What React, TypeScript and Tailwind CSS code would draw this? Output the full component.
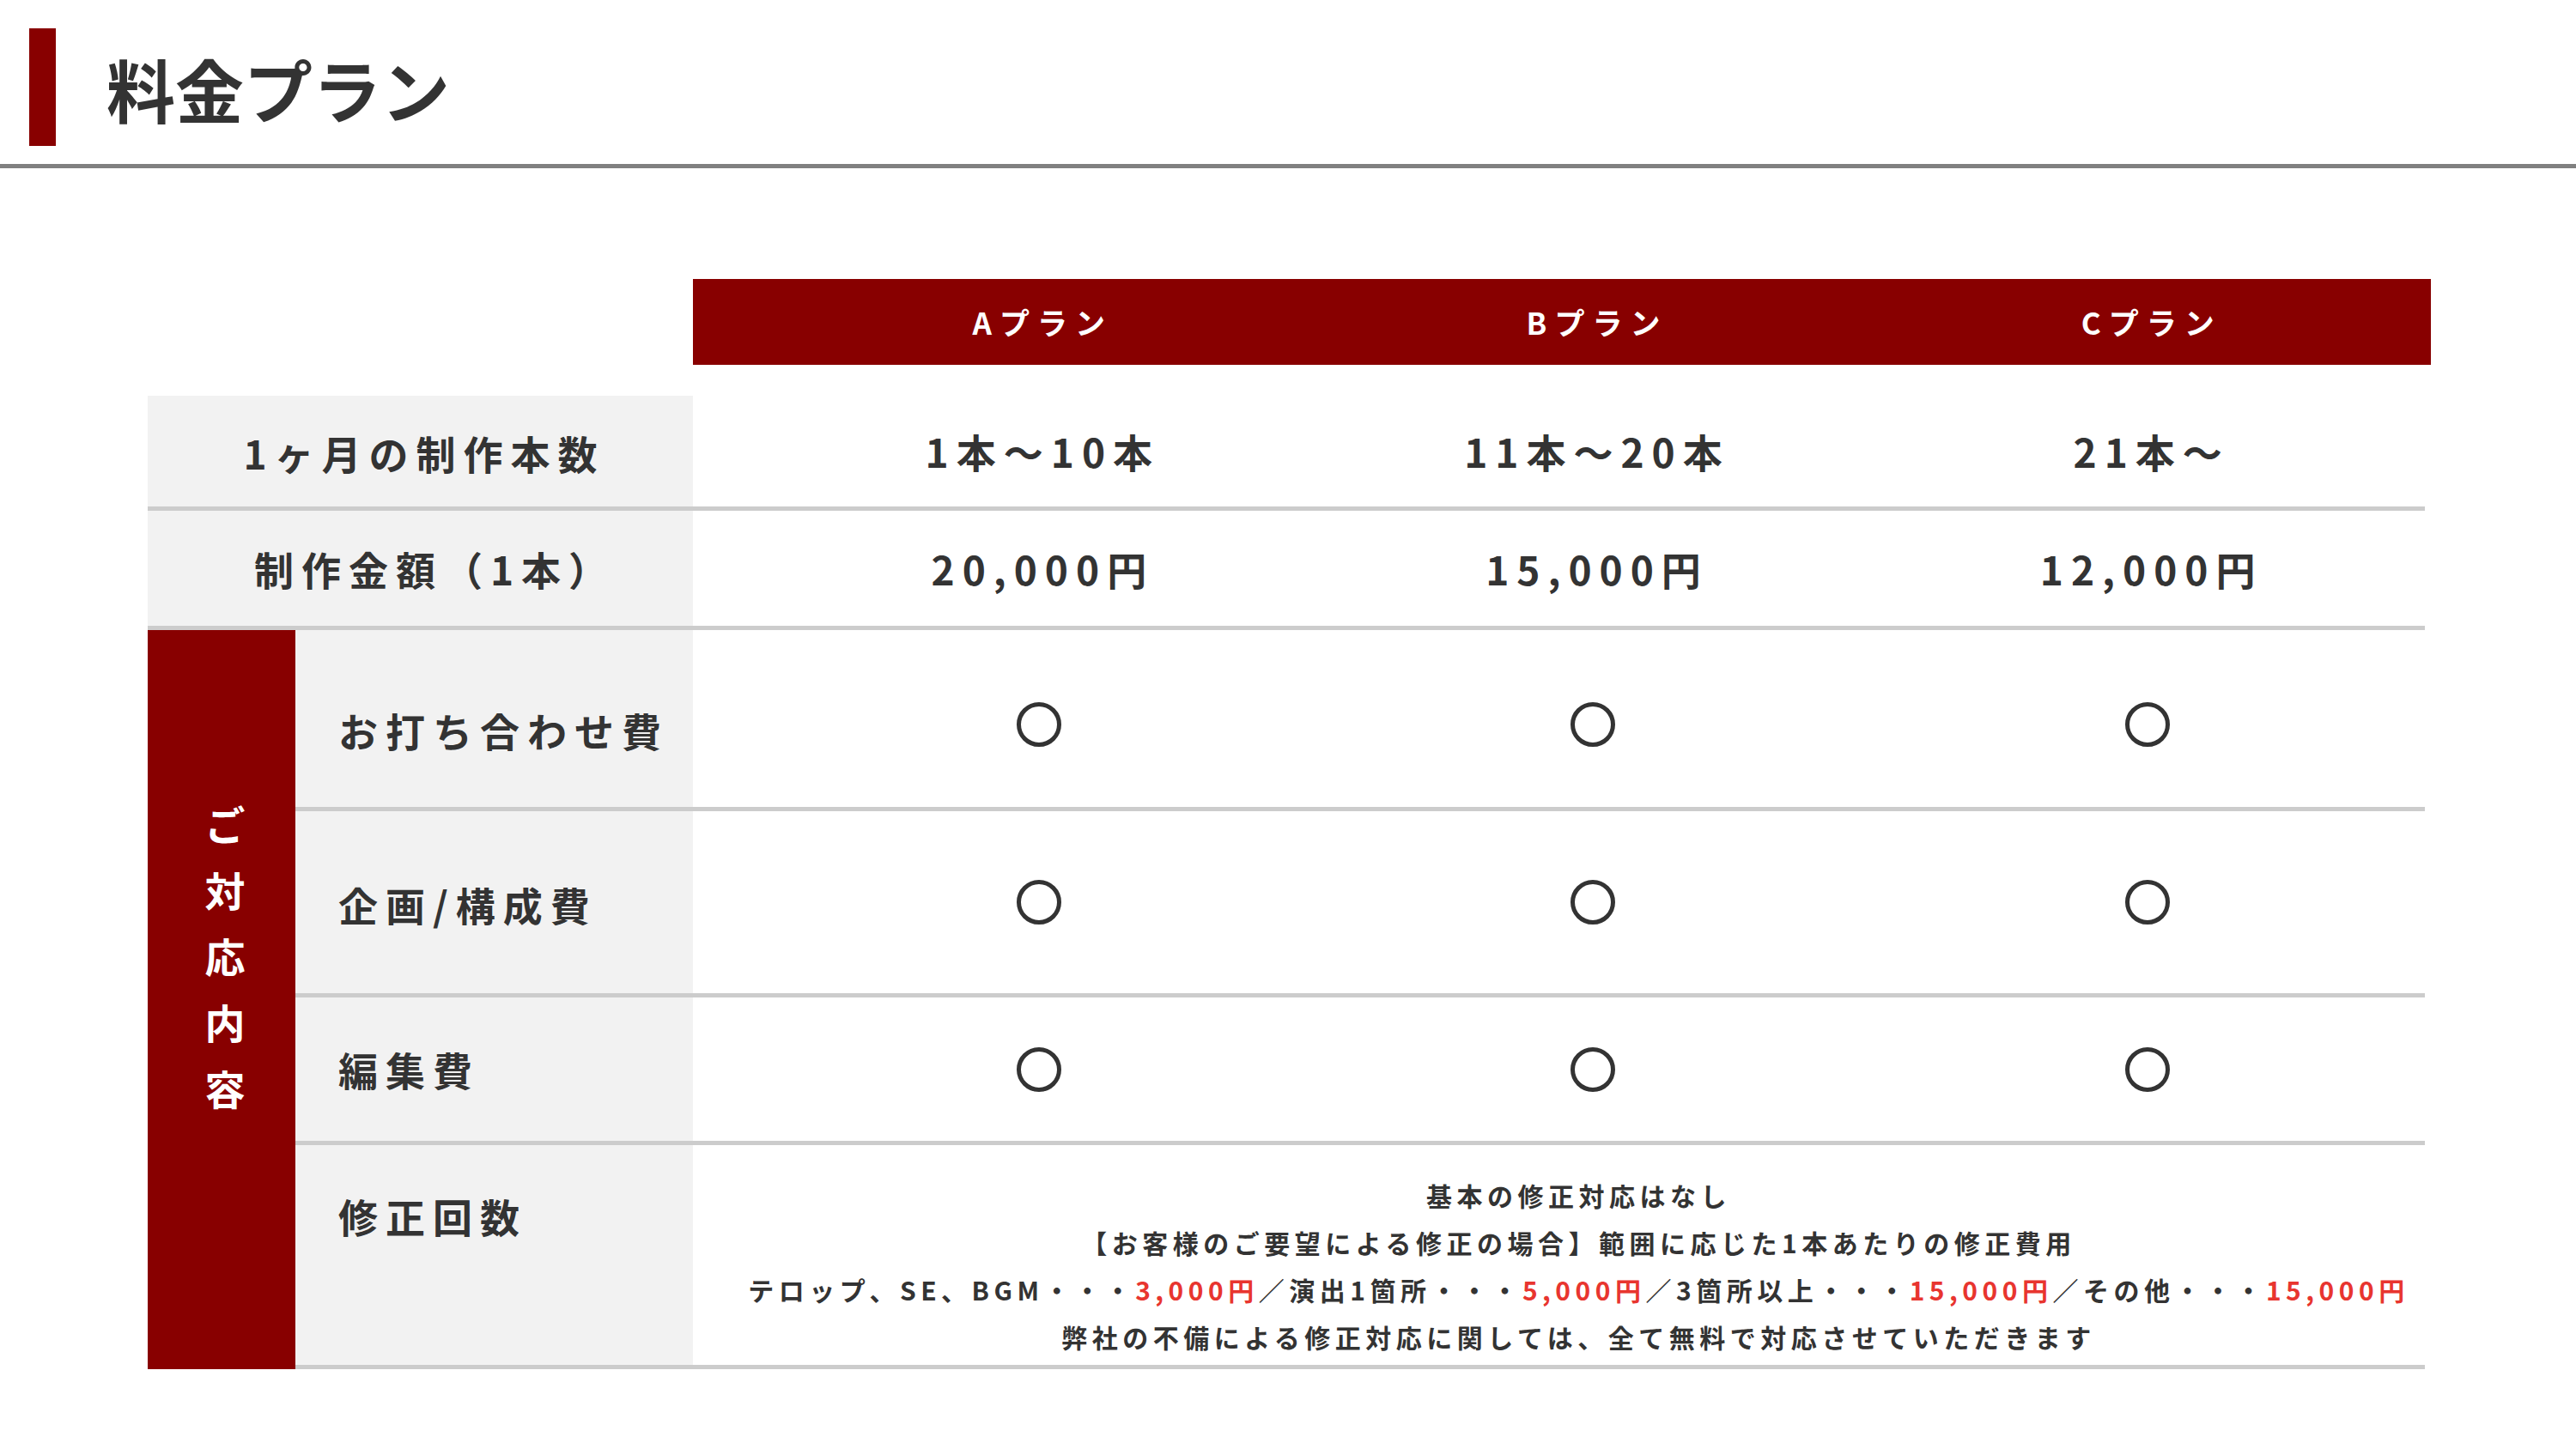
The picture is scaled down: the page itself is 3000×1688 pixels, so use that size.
const FONT = { fontFamily: '"Noto Sans CJK JP", "Noto Sans", sans-serif' }

const plans = ['Aプラン', 'Bプラン', 'Cプラン']

function Circle() {
  return <div className="h-[52px] w-[52px] rounded-full border-[5px] border-[#333333]" />
}

function ValueCols({ children }: { children: React.ReactNode[] }) {
  return (
    <div className="grid w-[1937px] shrink-0 grid-cols-3">
      {children.map((c, i) => (
        <div key={i} className="flex items-center justify-center">
          {c}
        </div>
      ))}
    </div>
  )
}

function Red({ children }: { children: React.ReactNode }) {
  return <span className="text-[#e8352f]">{children}</span>
}

const rows = [
  { label: 'お打ち合わせ費', h: 'h-[211px]', lpt: 'pt-[26px]', vpt: 'pt-[14px]' },
  { label: '企画/構成費', h: 'h-[217px]', lpt: 'pt-[4px]', vpt: 'pt-0' },
  { label: '編集費', h: 'h-[172px]', lpt: 'pt-0', vpt: 'pt-0' },
]

export default function App() {
  return (
    <div className="h-[1688px] w-[3000px] overflow-hidden bg-white text-[#333333]" style={FONT}>
      {/* Title */}
      <div className="flex items-center pl-[34px] pt-[33px]">
        <div className="h-[137px] w-[31px] bg-[#880000]" />
        <h1 className="ml-[59px] text-[80px] font-bold leading-none">料金プラン</h1>
      </div>
      <div className="mt-[21px] h-[5px] w-full bg-[#808080]" />

      {/* Table */}
      <div className="ml-[172px] mt-[129px] w-[2659px]">
        {/* Header */}
        <div className="flex">
          <div className="w-[635px] shrink-0" />
          <div className="flex h-[100px] w-[2024px] shrink-0 bg-[#880000] pl-[80px]">
            <ValueCols>
              {plans.map((p) => (
                <span key={p} className="pl-[9px] text-[35px] font-bold tracking-[9px] text-white">
                  {p}
                </span>
              ))}
            </ValueCols>
          </div>
        </div>

        <div className="mt-[36px] w-[2652px]">
          {/* Row 1 */}
          <div className="flex h-[134px] border-b-[5px] border-[#cccccc]">
            <div className="flex w-[635px] shrink-0 items-center justify-center bg-[#f2f2f2] pl-[9px] pt-[4px] text-[46px] font-bold tracking-[9px]">
              1ヶ月の制作本数
            </div>
            <div className="flex pl-[80px]">
              <ValueCols>
                {['1本〜10本', '11本〜20本', '21本〜'].map((v) => (
                  <span key={v} className="pl-[9px] text-[46px] font-bold tracking-[9px]">
                    {v}
                  </span>
                ))}
              </ValueCols>
            </div>
          </div>

          {/* Row 2 */}
          <div className="flex h-[139px] border-b-[5px] border-[#cccccc]">
            <div className="flex w-[635px] shrink-0 items-center justify-center bg-[#f2f2f2] pl-[34px] text-[46px] font-bold tracking-[9px]">
              制作金額（1本）
            </div>
            <div className="flex pl-[80px]">
              <ValueCols>
                {['20,000円', '15,000円', '12,000円'].map((v) => (
                  <span key={v} className="pl-[9px] text-[46px] font-bold tracking-[9px]">
                    {v}
                  </span>
                ))}
              </ValueCols>
            </div>
          </div>

          {/* Service rows */}
          <div className="flex">
            <div className="flex w-[172px] shrink-0 items-center justify-center bg-[#880000] pb-[104px] pl-[8px]">
              <div className="flex flex-col items-center text-[47px] font-bold leading-[77px] text-white">
                {'ご対応内容'.split('').map((c) => (
                  <span key={c}>{c}</span>
                ))}
              </div>
            </div>
            <div className="flex min-w-0 flex-1 flex-col">
              {rows.map((r) => (
                <div key={r.label} className={`flex border-b-[5px] border-[#cccccc] ${r.h}`}>
                  <div
                    className={`flex w-[463px] shrink-0 items-center bg-[#f2f2f2] pl-[50px] text-[46px] font-bold tracking-[9px] ${r.lpt}`}
                  >
                    {r.label}
                  </div>
                  <div className={`flex pl-[80px] ${r.vpt}`}>
                    <ValueCols>
                      <Circle />
                      <Circle />
                      <Circle />
                    </ValueCols>
                  </div>
                </div>
              ))}

              {/* Row 6 */}
              <div className="flex h-[261px] border-b-[5px] border-[#cccccc]">
                <div className="w-[463px] shrink-0 bg-[#f2f2f2] pl-[50px] pt-[52px] text-[46px] font-bold leading-[60px] tracking-[9px]">
                  修正回数
                </div>
                <div className="flex flex-1 justify-center whitespace-nowrap pl-[46px] pt-[31px] text-center text-[30px] font-bold leading-[55px] tracking-[5.5px]">
                  <div>
                    <p>基本の修正対応はなし</p>
                    <p>【お客様のご要望による修正の場合】範囲に応じた1本あたりの修正費用</p>
                    <p>
                      テロップ、SE、BGM・・・<Red>3,000円</Red>／演出1箇所・・・<Red>5,000円</Red>／3箇所以上・・・
                      <Red>15,000円</Red>／その他・・・<Red>15,000円</Red>
                    </p>
                    <p>弊社の不備による修正対応に関しては、全て無料で対応させていただきます</p>
                  </div>
                </div>
              </div>
            </div>
          </div>
        </div>
      </div>
    </div>
  )
}
